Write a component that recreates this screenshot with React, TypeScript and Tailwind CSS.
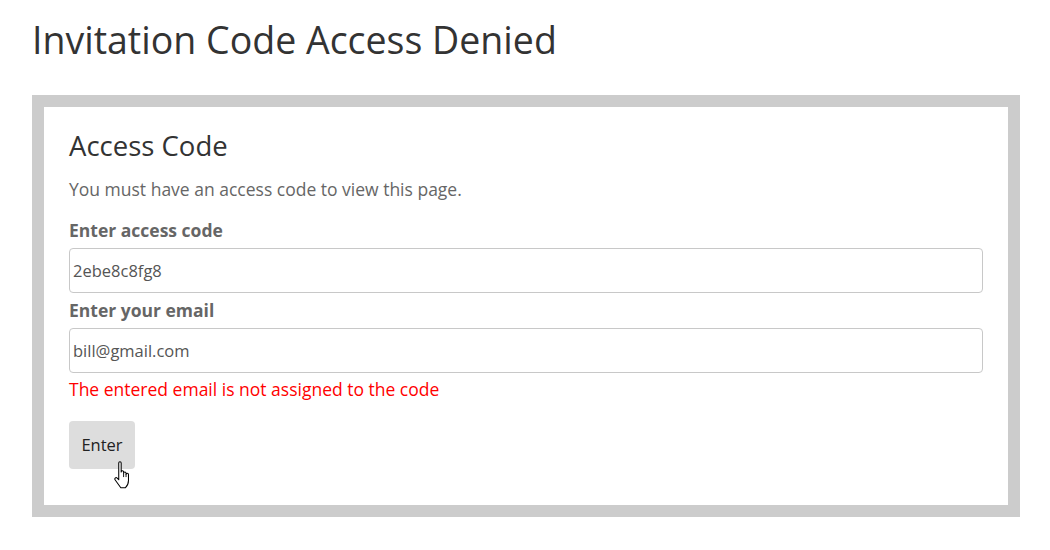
function HandCursor() {
  return (
    <svg width="22" height="28" viewBox="0 0 18 23" className="pointer-events-none">
      <path
        d="M5.5 1.6a1 1 0 0 1 2 0V9a1 1 0 0 1 2 0v1a1 1 0 0 1 2 0v1a1 1 0 0 1 2 0v5c0 3-1.3 4.8-2.6 6H7.2L2.6 15.6a1.1 1.1 0 0 1 1.6-1.6l1.3 1.4Z"
        fill="#fff"
        stroke="#000"
        strokeWidth="0.85"
        strokeLinejoin="round"
      />
      <path d="M9.5 10v3.2M11.5 11v2.2" stroke="#000" strokeWidth="0.75" />
    </svg>
  )
}

export default function App() {
  return (
    <main className="min-h-screen bg-white px-8 pt-[14px] font-['Open_Sans',sans-serif]">
      <h1 className="text-[37.5px] leading-[52px] text-[#333]">Invitation Code Access Denied</h1>

      <div className="mt-[29px] w-[988px] border-[12px] border-[#cccccc] bg-white px-[25px] pt-[24px] pb-[36px]">
        <h2 className="text-[27.5px] leading-[29px] text-[#333]">Access Code</h2>
        <p className="mt-[17px] text-[17.5px] leading-6 text-[#666]">
          You must have an access code to view this page.
        </p>

        <label className="mt-[17px] block text-[17.5px] leading-6 font-bold text-[#666]">Enter access code</label>
        <input
          readOnly
          value="2ebe8c8fg8"
          className="mt-[6px] block h-[45px] w-full rounded-[4px] border border-[#c8c8c8] px-[3px] text-[16.5px] text-[#555] outline-none"
        />

        <label className="mt-[5px] block text-[17.5px] leading-6 font-bold text-[#666]">Enter your email</label>
        <input
          readOnly
          value="bill@gmail.com"
          className="mt-[6px] block h-[45px] w-full rounded-[4px] border border-[#c8c8c8] px-[3px] text-[16.5px] text-[#555] outline-none"
        />

        <p className="mt-[4px] text-[17.5px] leading-6 text-[#ff0000]">The entered email is not assigned to the code</p>

        <div className="relative mt-[20px] w-fit">
          <button className="h-[48px] w-[66px] rounded-[4px] bg-[#dddddd] text-[16.5px] text-[#222]">Enter</button>
          <div className="absolute left-[43px] top-[40px]">
            <HandCursor />
          </div>
        </div>
      </div>
    </main>
  )
}
